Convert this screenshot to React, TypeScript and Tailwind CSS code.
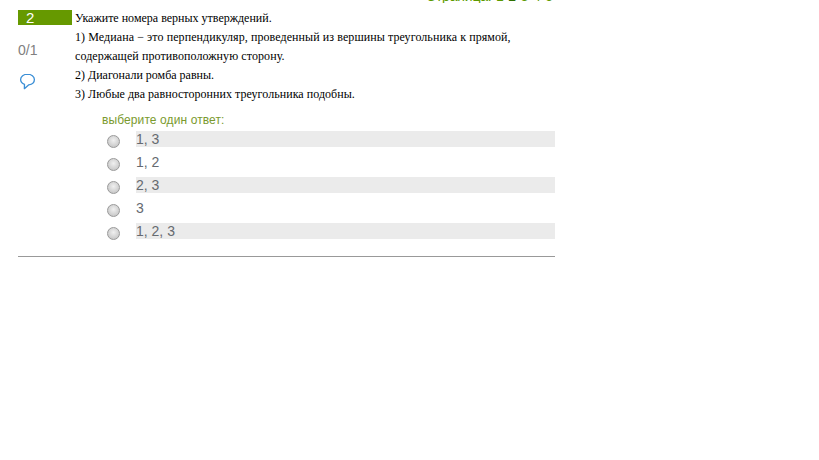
export default function App() {
  const answers = ["1, 3", "1, 2", "2, 3", "3", "1, 2, 3"];
  const sans = "font-['Liberation_Sans',Arial,sans-serif]";
  return (
    <div className={`w-[819px] h-[460px] overflow-hidden bg-white ${sans}`}>
      <div className="h-[3px] w-[555px] overflow-hidden relative">
        <div className="absolute right-[2px] -bottom-[1px] flex gap-[4.5px] text-[14px] leading-[16px] text-[#5c9a00] whitespace-nowrap">
          <span className="tracking-[-0.2px]">Страница:</span>
          <span>1</span>
          <span className="text-[#2f6f00]">2</span>
          <span>3</span>
          <span>4</span>
          <span>5</span>
        </div>
      </div>
      <div className="ml-[18px] w-[537px] mt-[7px]">
        <div className="flex">
          <div className="w-[54px] shrink-0">
            <div className="h-[15px] bg-[#669900] text-white text-[15px] leading-[15px] pl-[8px]">2</div>
            <div className="mt-[17px] text-[14px] leading-[16px] text-[#808080]">0/1</div>
            <svg className="mt-[15px] ml-[1px]" width="17" height="17" viewBox="0 0 17 18" fill="none">
              <path
                d="M8.5 1.2C4.4 1.2 1.2 3.7 1.2 6.9C1.2 9.2 2.9 11.1 5.3 12L5.2 16.6L9.9 12.5C13.4 12.1 15.8 9.8 15.8 6.9C15.8 3.7 12.6 1.2 8.5 1.2Z"
                stroke="#3b8fd6"
                strokeWidth="1.4"
                strokeLinejoin="round"
              />
            </svg>
          </div>
          <div className="ml-[3px] -mt-[1px] font-['Liberation_Serif','Times_New_Roman',serif] text-[12px] leading-[19px] text-black">
            <p>Укажите номера верных утверждений.</p>
            <p className="tracking-[0.08px]">1) Медиана − это перпендикуляр, проведенный из вершины треугольника к прямой, содержащей противоположную сторону.</p>
            <p>2) Диагонали ромба равны.</p>
            <p className="tracking-[0.04px]">3) Любые два равносторонних треугольника подобны.</p>
          </div>
        </div>
        <div className="mt-[9px] ml-[84px] text-[12px] leading-[14px] tracking-[0.1px] text-[#7a9a2e]">выберите один ответ:</div>
        <div className="mt-[4px] flex flex-col gap-[7px]">
          {answers.map((a, i) => (
            <div key={a} className="flex items-center h-[16px]">
              <span className="ml-[89px] mt-[5px] w-[13px] h-[13px] rounded-full border border-[#9a9a9a] bg-[radial-gradient(circle_at_50%_40%,#f0f0f0,#bdbdbd)] shrink-0" />
              <div className={`ml-[16px] flex-1 h-[16px] text-[14px] leading-[16px] text-[#666a70] ${i % 2 === 0 ? "bg-[#ebebeb]" : ""}`}>
                {a}
              </div>
            </div>
          ))}
        </div>
        <div className="mt-[17px] h-[1px] bg-[#999999]" />
      </div>
    </div>
  );
}
